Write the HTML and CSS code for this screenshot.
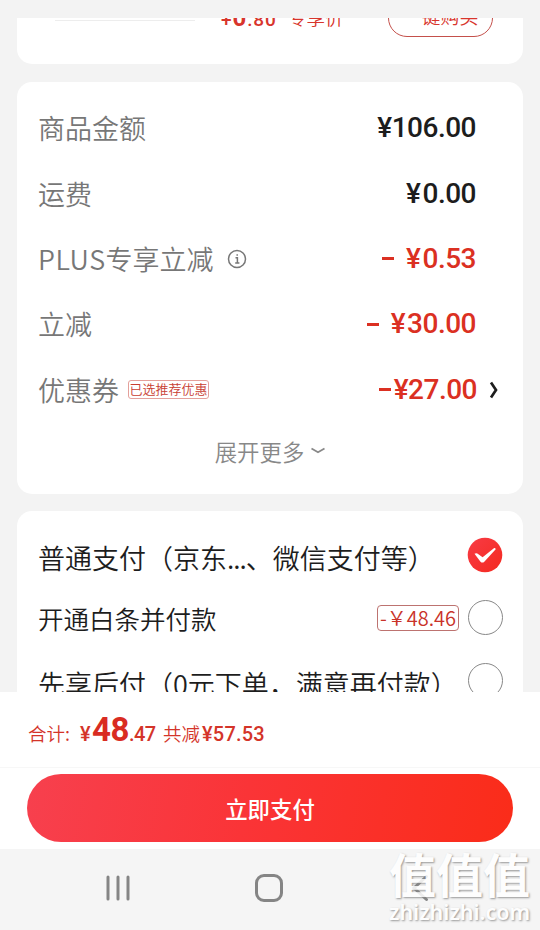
FILE: index.html
```html
<!DOCTYPE html>
<html lang="zh-CN">
<head>
<meta charset="utf-8">
<title>结算</title>
<link rel="stylesheet" href="styles.css">
</head>
<body>
<main class="scroll">
  <section class="card plus">
    <div class="plus-line"></div>
    <div class="plus-price num">+<b>0</b>.80</div>
    <div class="plus-name">专享价</div>
    <div class="plus-buy">一键购买</div>
  </section>
  <section class="card bill">
    <div class="row"><span class="label">商品金额</span><span class="num amount">¥106.00</span></div>
    <div class="row"><span class="label">运费</span><span class="num amount"><span class="sign">¥</span>0.00</span></div>
    <div class="row"><span class="label"><span class="latin">PLUS</span>专享立减</span>
      <svg class="info" viewBox="0 0 20 20"><circle cx="10" cy="10" r="8.5"/><path d="M8.500 8.700h1.900v5.200M8.200 14h4.200M10.200 5.200v1.500"/></svg>
      <span class="num amount red"><i class="minus"></i><span class="sign">¥</span>0.53</span></div>
    <div class="row"><span class="label">立减</span><span class="num amount red"><i class="minus"></i><span class="sign">¥</span>30.00</span></div>
    <div class="row"><span class="label">优惠券</span><span class="tag">已选推荐优惠</span><span class="num amount red coupon"><i class="minus tight"></i>¥27.00</span>
      <svg class="chev" viewBox="0 0 10 20"><path d="M2 2.500 7 10 2 17.500"/></svg></div>
    <div class="more">展开更多<svg viewBox="0 0 16 8"><path d="M1.500 1.500 8 5.200l6.500-3.700"/></svg></div>
  </section>
  <section class="card pay">
    <div class="option"><span>普通支付（京东<span class="dots">...</span>、微信支付等）</span>
      <svg class="check" viewBox="0 0 36 36"><defs><linearGradient id="g" x1="0" y1="0" x2="1" y2="1"><stop offset="0" stop-color="#f83b45"/><stop offset="1" stop-color="#f42a20"/></linearGradient></defs><circle cx="18" cy="18" r="17.300" fill="url(#g)"/><path fill="#fff" d="M7.500 16.800Q9.500 15.500 11.400 17.200L15.600 20.200 27.200 10.900Q28.500 10.700 28.700 12.200L17.300 24.700Q15.400 26.400 13.500 24.700Z"/></svg></div>
    <div class="option second"><span>开通白条并付款</span><span class="save">-￥48.46</span><i class="radio"></i></div>
    <div class="option third"><span>先享后付（0元下单，满意再付款）</span><i class="radio"></i></div>
  </section>
</main>
<footer class="checkout">
  <div class="total"><span class="sum">合计:</span><span class="num yen">¥</span><span class="num big">48</span><span class="num cents">.47</span><span class="cut">共减</span><span class="num off">¥57.53</span></div>
  <div class="action"><button class="submit">立即支付</button></div>
</footer>
<nav class="system">
  <svg class="recents" viewBox="0 0 26 28"><path d="M3 3v22M13 3v22M23 3v22"/></svg>
  <svg class="home" viewBox="0 0 30 30"><rect x="2.500" y="2.500" width="25" height="25" rx="7.500"/></svg>
  <svg class="back" viewBox="0 0 18 28"><path d="M15.500 2.500 3 14l12.500 11.500"/></svg>
</nav>
<div class="watermark"><div class="wm-name">值值值</div><div class="wm-site">zhizhizhi.com</div></div>
</body>
</html>
```
FILE: styles.css
```css
* { box-sizing: border-box; }
body {
  margin: 0;
  width: 540px;
  height: 930px;
  display: flex;
  flex-direction: column;
  position: relative;
  overflow: hidden;
  padding-top: 18px;
  background: #f3f3f3;
  color: #1d1d1d;
  font-family: "Noto Sans CJK SC", sans-serif;
  font-weight: 350;
}
svg { flex: none; fill: none; }
.scroll {
  height: 674px;
  flex: none;
  overflow: hidden;
  padding: 0 17px;
  display: flex;
  flex-direction: column;
  gap: 17.500px;
}
.card { flex: none; background: #fff; border-radius: 15px; }
.num { font-family: Roboto, sans-serif; font-weight: 500; }
.red { color: #db3022; }

.plus {
  height: 66px;
  margin-top: -20px;
  display: flex;
  align-items: flex-start;
  color: #d8352c;
}
.plus > div { flex: none; }
.plus-line { width: 140px; height: 1px; margin: 22px 0 0 38px; background: #ededed; }
.plus-price { width: 67px; margin-left: 26px; font-size: 19px; line-height: 41px; letter-spacing: .9px; white-space: nowrap; }
.plus-price b { font-size: 24px; }
.plus-name { width: 100px; font-size: 18.500px; line-height: 38px; }
.plus-buy {
  width: 105px;
  height: 39px;
  border: 1px solid #c4504b;
  border-radius: 19px;
  text-align: center;
  font-size: 19px;
  line-height: 33px;
}

.bill { height: 412px; padding: 14px 24px 0 21px; }
.row { height: 65.400px; display: flex; align-items: center; }
.label { color: #777; font-size: 27px; line-height: 40px; }
.latin { letter-spacing: .5px; }
.amount {
  margin-left: auto;
  margin-right: 23px;
  display: flex;
  align-items: center;
  font-size: 28px;
  line-height: 36px;
  letter-spacing: -.5px;
}
.sign { margin-right: 2px; }
.minus { width: 12px; height: 3px; margin-right: 12px; background: currentColor; }
.minus.tight { margin-right: 3px; }
.coupon { margin-right: 12px; }
.info { width: 20px; height: 20px; margin-left: 13px; stroke: #777; stroke-width: 1.500; }
.tag {
  width: 81px;
  height: 19px;
  margin-left: 9px;
  border: 1px solid #e4a09b;
  border-radius: 3px;
  color: #c83d31;
  font-size: 13px;
  line-height: 16px;
  text-align: center;
  white-space: nowrap;
}
.chev { width: 10px; height: 20px; stroke: #1d1d1d; stroke-width: 2.700; }
.more {
  display: flex;
  align-items: center;
  justify-content: center;
  gap: 6px;
  height: 58px;
  padding-left: 4px;
  color: #888;
  font-size: 22.400px;
}
.more svg { width: 16px; height: 8px; stroke: #888; stroke-width: 1.800; }

.pay { height: 240px; padding: 12px 20px 0 21px; }
.option { height: 64px; display: flex; align-items: center; font-size: 27px; white-space: nowrap; }
.option > span:first-child { padding-top: 5px; }
.option.second > span:first-child { padding-top: 0; }
.dots { letter-spacing: -1px; }
.check { width: 36px; height: 36px; margin-left: auto; }
.option.second { height: 61px; font-size: 25.500px; }
.option.third { height: 65px; }
.radio { width: 35px; height: 35px; margin-left: auto; border: 1.500px solid #888; border-radius: 50%; }
.save {
  width: 82px;
  height: 26px;
  margin-left: auto;
  border: 1px solid #bd7370;
  border-radius: 4px;
  color: #c93229;
  font-size: 20px;
  line-height: 23px;
  text-align: center;
}
.save + .radio { margin-left: 9px; }

.checkout { height: 157px; flex: none; background: #fff; }
.total {
  height: 75px;
  padding-left: 28px;
  display: flex;
  align-items: baseline;
  color: #d43429;
  line-height: 76px;
  white-space: nowrap;
}
.sum { width: 52px; font-size: 18.500px; }
.yen { width: 12px; font-size: 20px; }
.big { width: 37px; font-size: 33px; font-weight: 700; letter-spacing: -.5px; color: #d92c22; }
.cents { width: 34px; font-size: 20px; letter-spacing: -.6px; }
.cut { width: 39px; font-size: 18.500px; }
.off { font-size: 20px; letter-spacing: .2px; }
.action { border-top: 1px solid #f7f7f7; padding: 6px 27px 0; }
.submit {
  display: block;
  width: 100%;
  height: 68px;
  padding: 0;
  border: 0;
  border-radius: 34px;
  background: linear-gradient(100deg, #f7404e, #fa3437 45%, #fa2c19);
  color: #fff;
  font: 500 22.400px/66px "Noto Sans CJK SC", sans-serif;
}

.system { flex: 1; display: flex; align-items: center; padding: 0 0 3px 105px; background: #f5f5f5; }
.system svg { stroke: #858585; stroke-width: 3; stroke-linecap: round; }
.recents { width: 26px; height: 28px; }
.home { width: 30px; height: 30px; margin-left: 123px; }
.back { width: 18px; height: 28px; margin-left: 127px; }

.watermark { position: absolute; left: 389px; top: 848px; color: #fff; white-space: nowrap; text-shadow: 1px 1px 2px #888; opacity: .85; }
.wm-name { font-size: 47px; line-height: 50px; font-weight: 700; }
.wm-site { font: 600 21.500px/28px "Noto Sans", sans-serif; }
```
